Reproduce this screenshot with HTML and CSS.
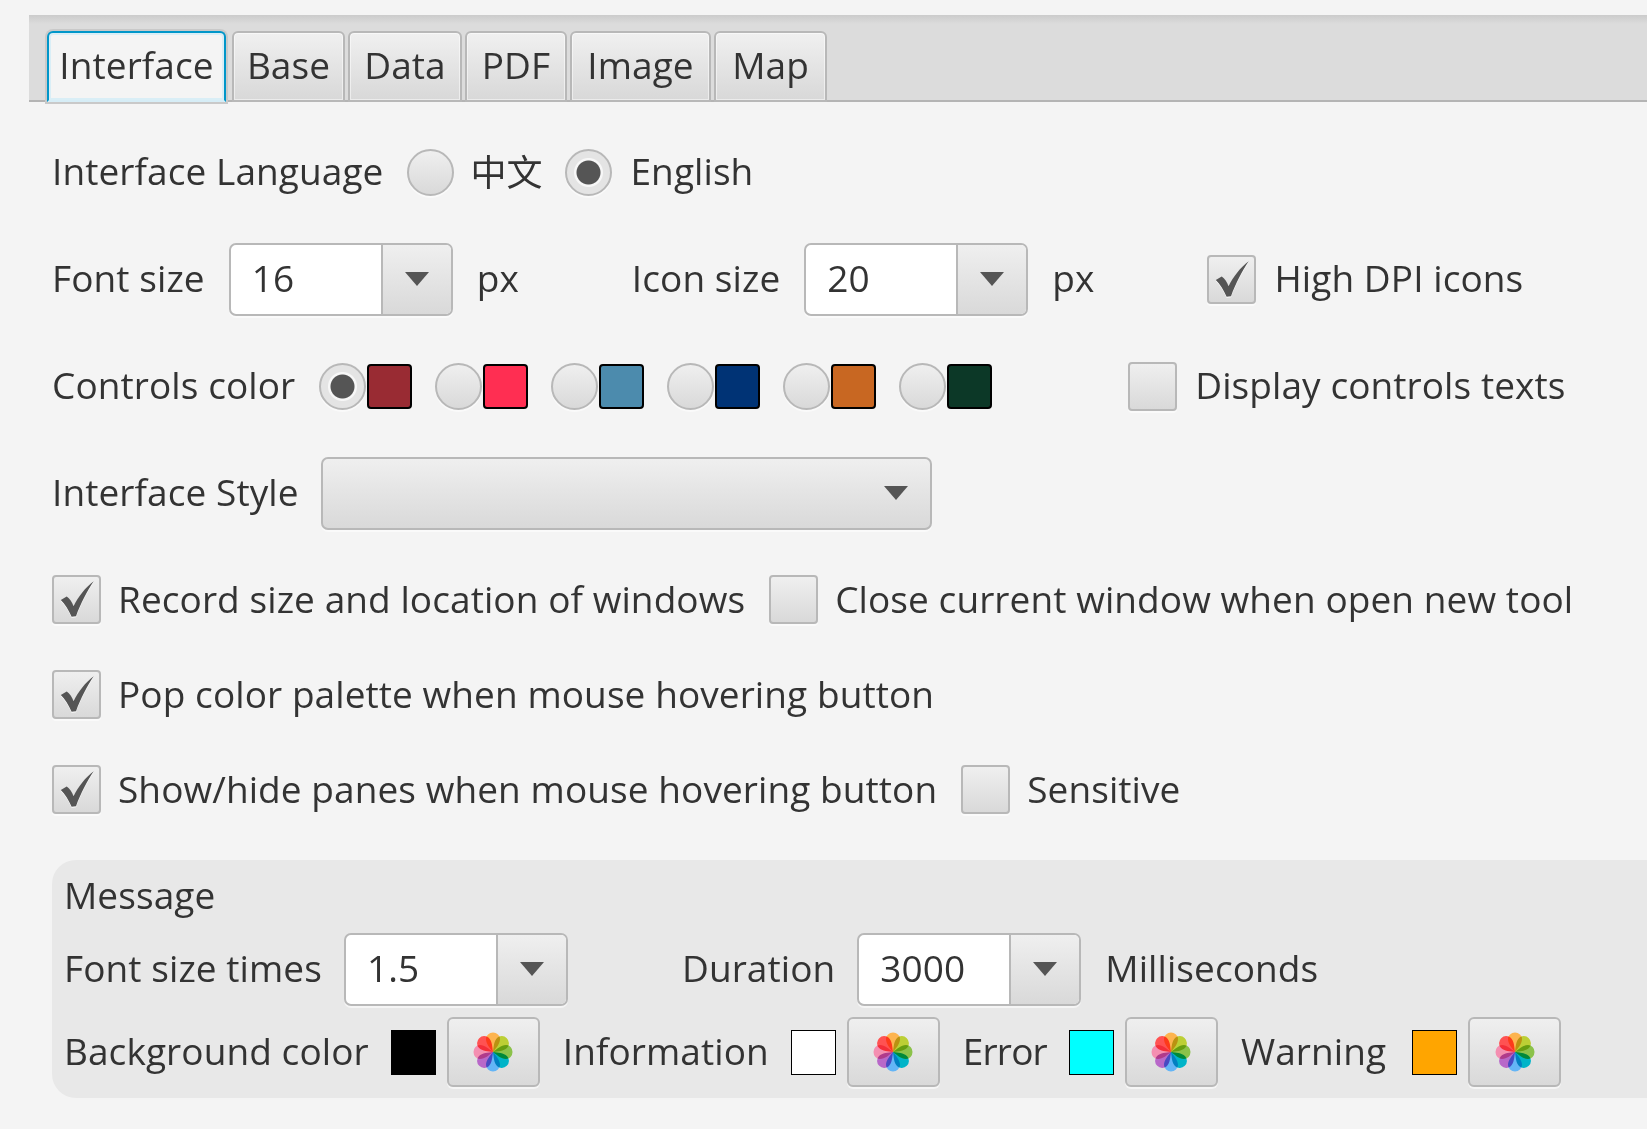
FILE: index.html
```html
<!DOCTYPE html>
<html lang="en">
<head>
  <meta charset="UTF-8">
  <title>Settings</title>
  <link rel="stylesheet" href="styles.css">
</head>
<body>
  <svg class="defs" width="0" height="0">
    <defs>
      <path id="tick" d="M9 25.5 L15 22 C18 24 20.5 27.5 22 32 C27 22 34 13 42.5 6.5 C36 16 29 30 24.5 42 L20 42.5 C17 36 13.5 30 9 25.5 Z"/>
      <path id="petal" d="M0 0 C-3 -4 -7 -8 -7 -13 A7 6.5 0 0 1 7 -13 C7 -8 3 -4 0 0 Z"/>
      <g id="flower">
        <use class="petal" href="#petal" fill="#fdb44f"/>
        <use class="petal" href="#petal" fill="#bccf35" transform="rotate(45)"/>
        <use class="petal" href="#petal" fill="#8bc24a" transform="rotate(90)"/>
        <use class="petal" href="#petal" fill="#00b4c8" transform="rotate(135)"/>
        <use class="petal" href="#petal" fill="#64b5f6" transform="rotate(180)"/>
        <use class="petal" href="#petal" fill="#b868c9" transform="rotate(225)"/>
        <use class="petal" href="#petal" fill="#f48fb1" transform="rotate(270)"/>
        <use class="petal" href="#petal" fill="#ff5252" transform="rotate(315)"/>
      </g>
    </defs>
  </svg>

  <div class="tabs">
    <div class="tab active"><label>Interface</label></div>
    <div class="tab"><label>Base</label></div>
    <div class="tab"><label>Data</label></div>
    <div class="tab"><label>PDF</label></div>
    <div class="tab"><label>Image</label></div>
    <div class="tab"><label>Map</label></div>
  </div>

  <div class="content">
    <div class="row">
      <label>Interface Language</label>
      <span class="radio"></span>
      <label class="near cjk">中文</label>
      <span class="radio on"></span>
      <label class="near">English</label>
    </div>

    <div class="row">
      <label>Font size</label>
      <div class="combo"><span class="value">16</span><span class="drop"><i class="arrow"></i></span></div>
      <label>px</label>
      <label class="wide">Icon size</label>
      <div class="combo"><span class="value">20</span><span class="drop"><i class="arrow"></i></span></div>
      <label>px</label>
      <span class="check checked wide"><svg viewBox="0 0 50 50"><use href="#tick"/></svg></span>
      <label class="near">High DPI icons</label>
    </div>

    <div class="row">
      <label>Controls color</label>
      <div class="palette">
        <div class="choice"><span class="radio on"></span><span class="swatch c1"></span></div>
        <div class="choice"><span class="radio"></span><span class="swatch c2"></span></div>
        <div class="choice"><span class="radio"></span><span class="swatch c3"></span></div>
        <div class="choice"><span class="radio"></span><span class="swatch c4"></span></div>
        <div class="choice"><span class="radio"></span><span class="swatch c5"></span></div>
        <div class="choice"><span class="radio"></span><span class="swatch c6"></span></div>
      </div>
      <span class="check wider"></span>
      <label class="near">Display controls texts</label>
    </div>

    <div class="row">
      <label>Interface Style</label>
      <div class="select"><i class="arrow"></i></div>
    </div>

    <div class="checks">
      <div class="check-row">
        <span class="check checked"><svg viewBox="0 0 50 50"><use href="#tick"/></svg></span>
        <label class="near">Record size and location of windows</label>
        <span class="check"></span>
        <label class="near">Close current window when open new tool</label>
      </div>
      <div class="check-row">
        <span class="check checked"><svg viewBox="0 0 50 50"><use href="#tick"/></svg></span>
        <label class="near">Pop color palette when mouse hovering button</label>
      </div>
      <div class="check-row">
        <span class="check checked"><svg viewBox="0 0 50 50"><use href="#tick"/></svg></span>
        <label class="near">Show/hide panes when mouse hovering button</label>
        <span class="check"></span>
        <label class="near">Sensitive</label>
      </div>
    </div>

    <div class="panel">
      <div class="panel-title"><label>Message</label></div>
      <div class="panel-row">
        <label>Font size times</label>
        <div class="combo"><span class="value">1.5</span><span class="drop"><i class="arrow"></i></span></div>
        <label class="wide">Duration</label>
        <div class="combo"><span class="value">3000</span><span class="drop"><i class="arrow"></i></span></div>
        <label class="unit">Milliseconds</label>
      </div>
      <div class="panel-row colors">
        <label>Background color</label>
        <span class="swatch black"></span>
        <div class="pick"><svg viewBox="-20 -20 40 40"><use href="#flower"/></svg></div>
        <label>Information</label>
        <span class="swatch white"></span>
        <div class="pick"><svg viewBox="-20 -20 40 40"><use href="#flower"/></svg></div>
        <label class="tight">Error</label>
        <span class="swatch cyan"></span>
        <div class="pick"><svg viewBox="-20 -20 40 40"><use href="#flower"/></svg></div>
        <label>Warning</label>
        <span class="swatch orange"></span>
        <div class="pick"><svg viewBox="-20 -20 40 40"><use href="#flower"/></svg></div>
      </div>
    </div>
  </div>
</body>
</html>
```

FILE: styles.css
```css
:root {
  --line: #b8b8b8;
  --face: linear-gradient(#efefef, #d9d9d9);
  --shine: 0 2px 0 rgba(255, 255, 255, 0.55);
}

* {
  box-sizing: border-box;
}

html, body {
  height: 100%;
}

body {
  margin: 0;
  background: #f4f4f4;
  color: #333;
  font-family: "Open Sans", "Noto Sans CJK SC", sans-serif;
  font-size: 37px;
  letter-spacing: 0.08px;
  overflow: hidden;
}

label {
  margin-bottom: 3px;
}

.defs {
  position: absolute;
}

/* tab strip */
.tabs {
  display: grid;
  grid-template-columns: 182px 113px 114px 102px 141px 113px;
  align-items: end;
  justify-content: start;
  gap: 3px;
  height: 87px;
  margin: 15px 0 0 29px;
  padding-left: 18px;
  background: linear-gradient(#cbcbcb, #dcdcdc 9px);
  border-bottom: 2px solid #b4b4b4;
}

.tab {
  display: flex;
  align-items: center;
  justify-content: center;
  height: 71px;
  margin-bottom: -2px;
  border: 2px solid var(--line);
  border-radius: 6px 6px 0 0;
  background: linear-gradient(#f0f0f0, #d8d8d8);
  box-shadow: inset 0 0 0 1px rgba(255, 255, 255, 0.5);
}

.tab label {
  margin-bottom: 5px;
}

.tab.active {
  width: 179px;
  background: #f4f4f4;
  border: 2px solid #0096c9;
  border-bottom-color: #d6edf6;
  box-shadow: 0 0 0 2px #c9c9c9, inset 0 0 0 2px #d9eef6;
}

/* rows */
.content {
  padding: 33px 0 0 52px;
}

.row {
  display: flex;
  align-items: center;
  gap: 24px;
  height: 74px;
  margin-bottom: 33px;
  white-space: nowrap;
}

.row .near {
  margin-left: -6px;
}

.wide {
  margin-left: 89px;
}

.wider {
  margin-left: 112px;
}

.row .cjk {
  margin: 0 -1px 3px -8px;
  font-size: 36px;
  letter-spacing: 0;
}

.radio {
  flex: none;
  width: 47px;
  height: 47px;
  border: 2px solid var(--line);
  border-radius: 50%;
  background: var(--face);
  box-shadow: var(--shine);
}

.radio.on {
  background: radial-gradient(circle, #555 11.5px, #f7f7f7 12.5px, #f7f7f7 14px, #e4e4e4 15px);
}

.check {
  flex: none;
  display: block;
  width: 49px;
  height: 49px;
  border: 2px solid var(--line);
  border-radius: 4px;
  background: var(--face);
  box-shadow: var(--shine);
}

.check svg {
  display: block;
  width: 49px;
  height: 49px;
  margin: -2px;
  fill: #555;
  filter: drop-shadow(0 1px 0 #fff);
}

/* combo boxes */
.combo {
  flex: none;
  display: flex;
  width: 224px;
  height: 73px;
  border: 2px solid var(--line);
  border-radius: 7px;
  background: #fff;
  box-shadow: var(--shine);
  overflow: hidden;
}

.value {
  flex: 1;
  align-self: center;
  padding: 0 0 3px 21px;
}

.drop {
  display: flex;
  align-items: center;
  justify-content: center;
  width: 70px;
  border-left: 2px solid var(--line);
  background: var(--face);
}

.arrow {
  display: block;
  width: 0;
  height: 0;
  border-left: 12px solid transparent;
  border-right: 12px solid transparent;
  border-top: 14px solid #555;
}

.select {
  flex: none;
  display: flex;
  align-items: center;
  justify-content: flex-end;
  width: 611px;
  height: 73px;
  margin-left: -2px;
  padding-right: 22px;
  border: 2px solid var(--line);
  border-radius: 7px;
  background: var(--face);
  box-shadow: var(--shine);
}

/* color picks */
.palette {
  display: flex;
  gap: 23px;
}

.choice {
  display: flex;
  align-items: center;
  gap: 1px;
}

.swatch {
  flex: none;
  display: block;
  width: 45px;
  height: 45px;
  border: 2px solid #000;
  border-radius: 4px;
}

.c1 { background: #992b33; }
.c2 { background: #ff2e52; }
.c3 { background: #4c8bad; }
.c4 { background: #003375; }
.c5 { background: #c86722; }
.c6 { background: #0c3827; }

.panel-row .swatch {
  margin-left: 11px;
  border-width: 1px;
  border-radius: 0;
}

.black { background: #000; }
.white { background: #fff; }
.cyan { background: #0ff; }
.orange { background: #ffa500; }

.panel-row .orange {
  margin-left: 15px;
}

/* checkbox rows */
.checks {
  display: flex;
  flex-direction: column;
  gap: 46px;
  margin-top: 45px;
}

.check-row {
  display: flex;
  align-items: center;
  gap: 24px;
  height: 49px;
  white-space: nowrap;
}

.check-row .near {
  margin-left: -7px;
}

/* message panel */
.panel {
  display: flex;
  flex-direction: column;
  gap: 12px;
  height: 238px;
  margin: 46px 0 0 0;
  padding: 11px 0 0 12px;
  background: #e8e8e8;
  border-radius: 24px 0 0 24px;
  white-space: nowrap;
}

.panel-title {
  height: 48px;
  margin-bottom: 2px;
  line-height: 48px;
}

.panel-row {
  display: flex;
  align-items: center;
  gap: 22px;
  height: 72px;
}

.panel-row .wide {
  margin-left: 92px;
}

.unit {
  margin-left: 2px;
}

.tight {
  letter-spacing: -0.8px;
}

.colors {
  gap: 11px;
  height: 70px;
}

.pick {
  flex: none;
  display: flex;
  align-items: center;
  justify-content: center;
  width: 93px;
  height: 70px;
  margin-right: 12px;
  border: 2px solid var(--line);
  border-radius: 6px;
  background: var(--face);
  box-shadow: var(--shine);
}

.pick svg {
  display: block;
  width: 40px;
  height: 40px;
  isolation: isolate;
}

.petal {
  mix-blend-mode: multiply;
}
```
